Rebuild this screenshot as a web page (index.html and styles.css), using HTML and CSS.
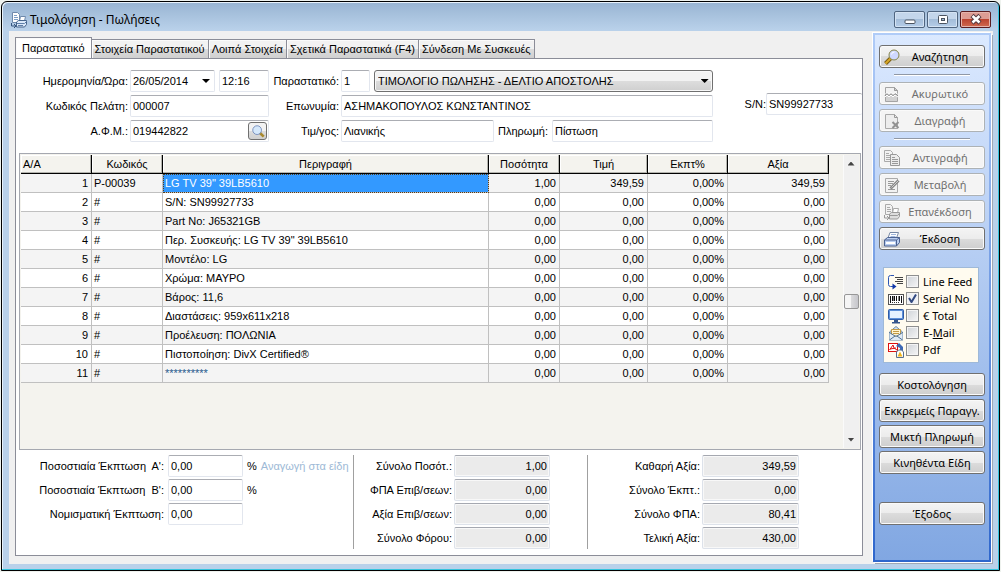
FILE: index.html
```html
<!DOCTYPE html>
<html lang="el">
<head>
    <meta charset="UTF-8">
    <meta name="viewport" content="width=device-width, initial-scale=1.0">
    <title>Τιμολόγηση - Πωλήσεις</title>
    <link rel="stylesheet" href="styles.css">
</head>
<body>
    <div class="window">
        <header class="titlebar">
            <svg class="title-icon" viewBox="0 0 16 16" aria-hidden="true">
                <path d="M1.5 .5h5l2 2v8h-7z" fill="#fff" stroke="#6f8aac"/>
                <path d="M3 3.5h3M3 5.5h4M3 7.5h4" stroke="#7f9fc6"/>
                <path d="M.5 11v3h4M3 12l2 2-2 2" fill="none" stroke="#35557f"/>
                <path d="M8.5 9l1-4.500h5l-1 4.500z" fill="#fff" stroke="#6f8aac"/>
                <path d="M5.5 10l2-1.500h8v4l-2 2.500h-8z" fill="#dbe9fa" stroke="#46658c"/>
                <path d="M6 11.500h7.500l2-2M7 13.500h5" fill="none" stroke="#5f7fa8"/>
            </svg>
            <h1>Τιμολόγηση - Πωλήσεις</h1>
            <div class="window-buttons">
                <button type="button" aria-label="Ελαχιστοποίηση"><svg viewBox="0 0 12 12"><rect x="1" y="7" width="10" height="3.500" rx="1" fill="#fff" stroke="#4b5460"/></svg></button>
                <button type="button" aria-label="Μεγιστοποίηση"><svg viewBox="0 0 12 12"><rect x="1.5" y="2.5" width="9" height="8" rx="1" fill="#fff" stroke="#4b5460"/><rect x="4.5" y="5.5" width="3" height="2" fill="#9db8d6" stroke="#4b5460"/></svg></button>
                <button type="button" class="close" aria-label="Κλείσιμο"><svg viewBox="0 0 12 12"><path d="M2 2.500l8 7.500M10 2.500L2 10" stroke="#553a40" stroke-width="4.500"/><path d="M2.500 3l7 6.500M9.500 3l-7 6.500" stroke="#fff" stroke-width="2.500"/></svg></button>
            </div>
        </header>

        <div class="content">
            <main class="main">
                <nav class="tabs">
                    <button type="button" class="tab active">Παραστατικό</button>
                    <button type="button" class="tab">Στοιχεία Παραστατικού</button>
                    <button type="button" class="tab">Λοιπά Στοιχεία</button>
                    <button type="button" class="tab">Σχετικά Παραστατικά (F4)</button>
                    <button type="button" class="tab">Σύνδεση Με Συσκευές</button>
                </nav>

                <div class="pane">
                    <form class="head-form">
                        <div class="fields">
                            <label for="date">Ημερομηνία/Ώρα:</label>
                            <div class="group">
                                <div class="combo date">
                                    <input type="text" id="date" value="26/05/2014">
                                    <button type="button" class="drop" aria-label="Ημερολόγιο"></button>
                                </div>
                                <input type="text" class="time" value="12:16" aria-label="Ώρα">
                            </div>
                            <label for="docNo">Παραστατικό:</label>
                            <div class="group">
                                <input type="text" id="docNo" class="doc-no" value="1">
                                <div class="doc-type">
                                    <select aria-label="Τύπος παραστατικού">
                                        <option>ΤΙΜΟΛΟΓΙΟ ΠΩΛΗΣΗΣ - ΔΕΛΤΙΟ ΑΠΟΣΤΟΛΗΣ</option>
                                    </select>
                                </div>
                            </div>

                            <label for="customer">Κωδικός Πελάτη:</label>
                            <input type="text" id="customer" value="000007">
                            <label for="name">Επωνυμία:</label>
                            <input type="text" id="name" value="ΑΣΗΜΑΚΟΠΟΥΛΟΣ ΚΩΝΣΤΑΝΤΙΝΟΣ">

                            <label for="afm">Α.Φ.Μ.:</label>
                            <div class="combo">
                                <input type="text" id="afm" value="019442822">
                                <button type="button" class="lookup" aria-label="Εύρεση">
                                    <svg viewBox="0 0 16 16"><path d="M10 10l4.500 4.500" stroke="#a8892f" stroke-width="3"/><circle cx="7" cy="7" r="5" fill="#d5e8fb" stroke="#6f87b8"/></svg>
                                </button>
                            </div>
                            <label for="price">Τιμ/γος:</label>
                            <div class="group">
                                <input type="text" id="price" class="price" value="Λιανικής">
                                <label for="payment">Πληρωμή:</label>
                                <input type="text" id="payment" class="payment" value="Πίστωση">
                            </div>
                        </div>
                        <div class="serial">
                            <label for="sn">S/N:</label>
                            <input type="text" id="sn" value="SN99927733">
                        </div>
                    </form>

                    <div class="grid-frame">
                        <div class="grid-area">
                            <table class="grid">
                                <colgroup>
                                    <col class="c-num"><col class="c-code"><col><col class="c-qty"><col class="c-price"><col class="c-disc"><col class="c-value">
                                </colgroup>
                                <thead>
                                    <tr><th>Α/Α</th><th>Κωδικός</th><th>Περιγραφή</th><th>Ποσότητα</th><th>Τιμή</th><th>Εκπτ%</th><th>Αξία</th></tr>
                                </thead>
                                <tbody>
                                    <tr><td>1</td><td>P-00039</td><td class="selected">LG TV 39" 39LB5610</td><td>1,00</td><td>349,59</td><td>0,00%</td><td>349,59</td></tr>
                                    <tr><td>2</td><td>#</td><td>S/N: SN99927733</td><td>0,00</td><td>0,00</td><td>0,00%</td><td>0,00</td></tr>
                                    <tr><td>3</td><td>#</td><td>Part No: J65321GB</td><td>0,00</td><td>0,00</td><td>0,00%</td><td>0,00</td></tr>
                                    <tr><td>4</td><td>#</td><td>Περ. Συσκευής: LG TV 39" 39LB5610</td><td>0,00</td><td>0,00</td><td>0,00%</td><td>0,00</td></tr>
                                    <tr><td>5</td><td>#</td><td>Μοντέλο: LG</td><td>0,00</td><td>0,00</td><td>0,00%</td><td>0,00</td></tr>
                                    <tr><td>6</td><td>#</td><td>Χρώμα: ΜΑΥΡΟ</td><td>0,00</td><td>0,00</td><td>0,00%</td><td>0,00</td></tr>
                                    <tr><td>7</td><td>#</td><td>Βάρος: 11,6</td><td>0,00</td><td>0,00</td><td>0,00%</td><td>0,00</td></tr>
                                    <tr><td>8</td><td>#</td><td>Διαστάσεις: 959x611x218</td><td>0,00</td><td>0,00</td><td>0,00%</td><td>0,00</td></tr>
                                    <tr><td>9</td><td>#</td><td>Προέλευση: ΠΟΛΩΝΙΑ</td><td>0,00</td><td>0,00</td><td>0,00%</td><td>0,00</td></tr>
                                    <tr><td>10</td><td>#</td><td>Πιστοποίηση: DivX Certified®</td><td>0,00</td><td>0,00</td><td>0,00%</td><td>0,00</td></tr>
                                    <tr><td>11</td><td>#</td><td class="stars">**********</td><td>0,00</td><td>0,00</td><td>0,00%</td><td>0,00</td></tr>
                                </tbody>
                            </table>
                        </div>
                        <div class="scrollbar">
                            <button type="button" class="up" aria-label="Πάνω"></button>
                            <div class="thumb"></div>
                            <button type="button" class="down" aria-label="Κάτω"></button>
                        </div>
                    </div>

                    <form class="totals">
                        <div class="discounts">
                            <label for="discA">Ποσοστιαία Έκπτωση&nbsp; Α':</label>
                            <input type="text" id="discA" value="0,00">
                            <div class="group"><span>%</span><a href="#">Αναγωγή στα είδη</a></div>
                            <label for="discB">Ποσοστιαία Έκπτωση&nbsp; Β':</label>
                            <input type="text" id="discB" value="0,00">
                            <span>%</span>
                            <label for="discC">Νομισματική Έκπτωση:</label>
                            <input type="text" id="discC" value="0,00">
                        </div>
                        <div class="sums">
                            <label for="sumQty">Σύνολο Ποσότ.:</label>
                            <input type="text" id="sumQty" value="1,00" readonly>
                            <label for="vatSur">ΦΠΑ Επιβ/σεων:</label>
                            <input type="text" id="vatSur" value="0,00" readonly>
                            <label for="valSur">Αξία Επιβ/σεων:</label>
                            <input type="text" id="valSur" value="0,00" readonly>
                            <label for="sumTax">Σύνολο Φόρου:</label>
                            <input type="text" id="sumTax" value="0,00" readonly>
                        </div>
                        <div class="sums last">
                            <label for="net">Καθαρή Αξία:</label>
                            <input type="text" id="net" value="349,59" readonly>
                            <label for="sumDisc">Σύνολο Έκπτ.:</label>
                            <input type="text" id="sumDisc" value="0,00" readonly>
                            <label for="sumVat">Σύνολο ΦΠΑ:</label>
                            <input type="text" id="sumVat" value="80,41" readonly>
                            <label for="total">Τελική Αξία:</label>
                            <input type="text" id="total" value="430,00" readonly>
                        </div>
                    </form>
                </div>
            </main>

            <aside class="side">
                <button type="button" class="btn">
                    <svg viewBox="0 0 16 16"><path d="M1.5 14.5l5-5" stroke="#7a5c10" stroke-width="4"/><path d="M1.5 14.5l5-5" stroke="#d9a827" stroke-width="2"/><circle cx="10" cy="6" r="5" fill="#cfd8ff" stroke="#85854a"/><path d="M7.5 5.500a3 3 0 0 1 3-2.500" stroke="#fff" fill="none"/></svg>
                    <span>Αναζήτηση</span>
                </button>
                <hr>
                <button type="button" class="btn" disabled>
                    <svg viewBox="0 0 16 16"><path d="M1.5 15.5V1.5h9l3 3v11z" fill="#d2d2d2" stroke="#a4a4a4"/><path d="M2 2h8v3h3v3H2z" fill="#f2f2f2"/><path d="M1 8.500l2-2 2 2 2-2 2 2 2-2 3 2M1 11l2-2 2 2 2-2 2 2 2-2 3 2" fill="none" stroke="#fff"/><path d="M1 9.700l2-2 2 2 2-2 2 2 2-2 3 2" fill="none" stroke="#888"/><path d="M10.5 1.5v3h3" fill="none" stroke="#999"/></svg>
                    <span>Ακυρωτικό</span>
                </button>
                <button type="button" class="btn" disabled>
                    <svg viewBox="0 0 16 16"><path d="M1.5 1.5h9l3 3v11h-12z" fill="#ededed" stroke="#aaa"/><path d="M10.5 1.5v3h3" fill="none" stroke="#999"/><path d="M8.5 9l6 6M14.5 9l-6 6" stroke="#929292" stroke-width="2"/></svg>
                    <span>Διαγραφή</span>
                </button>
                <hr>
                <button type="button" class="btn" disabled>
                    <svg viewBox="0 0 16 16"><path d="M.5 .5h6l2 2v9h-8z" fill="#f2f2f2" stroke="#aaa"/><path d="M2 3.5h3M2 5.5h4M2 7.5h4M2 9.5h4" stroke="#aaa"/><path d="M6.5 4.5h6l3 3v8h-9z" fill="#ececec" stroke="#999"/><path d="M8 7.5h3M8 9.5h6M8 11.5h6M8 13.5h6" stroke="#999"/></svg>
                    <span>Αντιγραφή</span>
                </button>
                <button type="button" class="btn" disabled>
                    <svg viewBox="0 0 16 16"><path d="M1.5 1.5h12v14h-12z" fill="#f2f2f2" stroke="#aaa"/><path d="M4 4.5h6M4 6.5h5M4 8.5h3M4 12.5h7" stroke="#999"/><path d="M6.5 11.500l8-8" stroke="#888" stroke-width="3"/><path d="M7.5 10.500l7-7" stroke="#ccc"/></svg>
                    <span>Μεταβολή</span>
                </button>
                <button type="button" class="btn" disabled>
                    <svg viewBox="0 0 16 16"><path d="M1.5 .5h5l2 2v8h-7z" fill="#f2f2f2" stroke="#aaa"/><path d="M3 3.5h3M3 5.5h4M3 7.5h4" stroke="#aaa"/><path d="M.5 11v3h4M3 12l2 2-2 2" fill="none" stroke="#999"/><path d="M8.5 9l1-4.500h5l-1 4.500z" fill="#fff" stroke="#aaa"/><path d="M5.5 10l2-1.500h8v4l-2 2.500h-8z" fill="#ddd" stroke="#999"/><path d="M6 11.500h7.500l2-2" fill="none" stroke="#999"/></svg>
                    <span>Επανέκδοση</span>
                </button>
                <button type="button" class="btn">
                    <svg viewBox="0 0 16 16"><path d="M4 7l2-5.500h8.500L12.500 7z" fill="#fff" stroke="#7688a5"/><path d="M7 3.5h5M6.500 5.5h5" stroke="#9fb6dc"/><path d="M.5 9l3-2.500h12v5l-3 3.500H.5z" fill="#b9cdf0" stroke="#4d6391"/><path d="M.5 9h12l3-2.500M12.5 9v6" fill="none" stroke="#4d6391"/><path d="M2 12h9" stroke="#fff" stroke-width="2"/></svg>
                    <span>Έκδοση</span>
                </button>

                <div class="options">
                    <label>
                        <svg viewBox="0 0 16 16"><path d="M6 1.5H2.5a2 2 0 0 0-2 2v7a2 2 0 0 0 2 2h3" fill="none" stroke="#2b55b5"/><path d="M4.500 9.500l4 3-4 3z" fill="#1238a8"/><path d="M7 3.5h8M9 5.5h6M7 7.5h8M9 9.5h6" stroke="#444"/></svg>
                        <input type="checkbox"> <span>Line Feed</span>
                    </label>
                    <label>
                        <svg viewBox="0 0 16 16"><rect x=".5" y="3.5" width="15" height="10" fill="#fff" stroke="#555"/><path d="M2.5 5v7M4.5 5v5M6.500 5v5M8.5 5v5M11 5v5M13.5 5v7" stroke="#111"/><path d="M5 5v5M11.5 5v5" stroke="#111"/><path d="M4 11.5h8" stroke="#333" stroke-dasharray="1 1"/></svg>
                        <input type="checkbox" checked> <span>Serial No</span>
                    </label>
                    <label>
                        <svg viewBox="0 0 16 16"><rect x=".5" y="1.5" width="15" height="10" rx="1" fill="#5d8fd8" stroke="#2e5ba6"/><rect x="2" y="3" width="12" height="7" fill="#e5f1ff"/><path d="M6 12h4v2h2v1.500H4V14h2z" fill="#34558c"/></svg>
                        <input type="checkbox"> <span>€ Total</span>
                    </label>
                    <label>
                        <svg viewBox="0 0 16 16"><path d="M1.5 7L8 1.5 14.5 7v8h-13z" fill="#cfe0f0" stroke="#6b88a6"/><path d="M3.500 4.5h9v7h-9z" fill="#fff3cf" stroke="#c29a45"/><path d="M5 6.5h6M5 8.5h6" stroke="#c29a45"/><path d="M1.5 8L7 11.500h2L14.500 8v7h-13z" fill="#dfeaf5"/><path d="M1.5 15L7 11h2l5.500 4M1.5 7.500L7 11M14.5 7.500L9 11" fill="none" stroke="#4d6f93"/></svg>
                        <input type="checkbox"> <span>E-<u>M</u>ail</span>
                    </label>
                    <label>
                        <svg viewBox="0 0 16 16"><rect x=".5" y="1.5" width="9" height="8" fill="#fff" stroke="#d11"/><path d="M1.500 8L5 3l1 3 3 2M2 7l6-1" fill="none" stroke="#d11"/><path d="M8 4l3-3 4 4v4h-3V6z" fill="#3d68b4"/><path d="M8.5 15.5V10l2-2h3l2 2v5.500z" fill="#fff" stroke="#57708f"/><path d="M9.500 14.500L12 9.500l2.500 5z" fill="#f0b51e"/></svg>
                        <input type="checkbox"> <span>Pdf</span>
                    </label>
                </div>

                <button type="button" class="btn plain">Κοστολόγηση</button>
                <button type="button" class="btn plain">Εκκρεμείς Παραγγ.</button>
                <button type="button" class="btn plain">Μικτή Πληρωμή</button>
                <button type="button" class="btn plain">Κινηθέντα Είδη</button>
                <button type="button" class="btn plain exit">Έξοδος</button>
            </aside>
        </div>
    </div>
</body>
</html>
```
FILE: styles.css
```css
* {
    box-sizing: border-box;
}
body {
    margin: 0;
    min-height: 100vh;
    padding: 1px;
    display: flex;
    background: #eef2ee;
    font-family: "Liberation Sans", Arial, sans-serif;
    font-size: 11px;
    line-height: 13px;
    color: #000;
}
button, input, select {
    font: inherit;
    color: inherit;
    margin: 0;
}
svg {
    display: block;
    flex: none;
}

/* window */
.window {
    flex: 1;
    display: flex;
    flex-direction: column;
    padding: 1px 6px 6px 7px;
    border: 1px solid #000;
    border-radius: 6px 6px 0 0;
    background: linear-gradient(#98b4d2, #b9d1ea 28px);
    box-shadow: inset -1px -1px #35c3dc, inset 1px 1px #e8f2fb;
}
.titlebar {
    height: 28px;
    display: flex;
    align-items: center;
    gap: 3px;
    padding: 0 2px;
}
.title-icon {
    width: 16px;
    height: 16px;
    margin-top: 6px;
}
.titlebar h1 {
    margin: 6px 0 0;
    flex: 1;
    font-family: "Noto Sans", sans-serif;
    font-size: 12px;
    line-height: 16px;
    font-weight: normal;
}
.window-buttons {
    display: flex;
    gap: 2px;
    padding-top: 4px;
}
.window-buttons button {
    width: 31px;
    height: 17px;
    display: flex;
    align-items: center;
    justify-content: center;
    padding: 0;
    border: 1px solid #4f6580;
    border-radius: 2px;
    background: linear-gradient(#c3d6eb 50%, #a3bdd9 50%, #b5cde8);
    box-shadow: inset 0 0 0 1px #d4e3f3;
}
.window-buttons svg {
    width: 12px;
    height: 12px;
}
.window-buttons .close {
    border-color: #5a1c20;
    background: linear-gradient(#dd9c93 45%, #b9402d 45%, #d06a50);
    box-shadow: inset 0 0 0 1px #e5b4ac;
}
.content {
    flex: 1;
    display: flex;
    background: #f0f0f0;
}
.main {
    flex: 1;
    min-width: 0;
    display: flex;
    flex-direction: column;
    padding: 6px 9px 8px 6px;
}

/* tabs */
.tabs {
    display: flex;
    align-items: flex-end;
    margin-bottom: -1px;
}
.tab {
    height: 20px;
    padding: 0 3px;
    border: 1px solid #8b8d98;
    border-left-width: 0;
    background: linear-gradient(#f2f2f2 50%, #dcdcdc 50%, #d0d0d0);
    box-shadow: inset 1px 1px #fbfbfb;
    white-space: nowrap;
}
.tab.active {
    height: 22px;
    padding: 0 6px;
    border-left-width: 1px;
    border-bottom-color: #fff;
    background: #fff;
}
.pane {
    flex: 1;
    display: flex;
    flex-direction: column;
    padding: 11px 0 6px 3px;
    border: 1px solid #8b8d98;
    background: #fff;
}

/* header form */
input[type="text"] {
    width: 100%;
    min-width: 0;
    height: 22px;
    padding: 0 2px;
    border: 1px solid #e2e6ee;
    border-top-color: #abadb3;
    border-radius: 2px;
    background: #fff;
}
.head-form {
    display: flex;
    gap: 32px;
}
.fields {
    flex: 1;
    display: grid;
    grid-template-columns: 109px 139px 68px 1fr;
    gap: 3px 2px;
    align-items: center;
}
.fields > label {
    text-align: right;
    white-space: nowrap;
}
.group {
    display: flex;
    align-items: center;
    gap: 4px;
}
.combo {
    display: flex;
    align-items: center;
    border: 1px solid #e2e6ee;
    border-top-color: #abadb3;
    border-radius: 2px;
    padding-right: 1px;
}
.combo input[type="text"] {
    height: 20px;
    border: 0;
}
.date {
    width: 85px;
}
.drop {
    width: 14px;
    flex: none;
    height: 18px;
    padding: 0;
    border: 0;
    background: none;
}
.drop::after, .doc-type::after {
    content: "";
    display: block;
    width: 8px;
    height: 4px;
    margin: auto;
    background: #000;
    clip-path: polygon(0 0, 100% 0, 50% 100%);
}
.time {
    flex: 1;
}
.doc-no[type="text"] {
    width: 29px;
}
.doc-type {
    flex: 1;
    position: relative;
}
.doc-type::after {
    position: absolute;
    right: 4px;
    top: 9px;
}
.doc-type select {
    display: block;
    width: 100%;
    height: 22px;
    padding: 0 3px;
    appearance: none;
    border: 1px solid #707070;
    border-radius: 3px;
    background: linear-gradient(#f2f2f2 50%, #dddddd 50%, #cfcfcf);
    box-shadow: inset 0 0 0 1px #f8f8f8;
}
.lookup {
    flex: none;
    width: 19px;
    height: 18px;
    display: flex;
    align-items: center;
    justify-content: center;
    padding: 0;
    border: 1px solid #707070;
    border-radius: 3px;
    background: linear-gradient(#f2f2f2 50%, #dddddd 50%, #cfcfcf);
}
.lookup svg {
    width: 14px;
    height: 14px;
}
.price {
    flex: 154;
}
.payment {
    flex: 162;
}
.serial {
    display: flex;
    align-items: center;
    align-self: center;
    padding-bottom: 4px;
}
.serial input[type="text"] {
    width: 96px;
    border-right: 0;
}

/* items grid */
.grid-frame {
    flex: 1;
    display: flex;
    margin: 11px 1px 4px 0;
    padding: 1px;
    border: 1px solid #a5a8b0;
    background: #f4f3ee;
}
.grid-area {
    flex: 1;
    padding-right: 14px;
}
.grid {
    width: 100%;
    table-layout: fixed;
    border-collapse: separate;
    border-spacing: 0;
}
.c-num, .c-code, .c-qty {
    width: 71px;
}
.c-price {
    width: 88px;
}
.c-disc {
    width: 80px;
}
.c-value {
    width: 101px;
}
.grid th {
    height: 19px;
    padding: 0 2px;
    border-right: 1px solid #000;
    border-bottom: 1px solid #000;
    background: #f4f3ee;
    box-shadow: inset -1px -1px #b4b4ae, inset 1px 1px #fff;
    font-weight: normal;
}
.grid th:first-child {
    text-align: left;
}
.grid td {
    height: 19px;
    padding: 0 3px;
    border-right: 1px solid #c0c0c0;
    border-bottom: 1px solid #c0c0c0;
    background: #fff;
    text-align: right;
    white-space: nowrap;
}
.grid tr:nth-child(odd) td {
    background: #f4f4f4;
}
.grid td:nth-child(2), .grid td:nth-child(3) {
    padding: 0 2px;
    text-align: left;
}
.grid tr td.selected {
    background: #3399ff;
    color: #fff;
    outline: 1px dotted #5a3c14;
    outline-offset: -1px;
}
.grid td.stars {
    color: #26598c;
}
.scrollbar {
    width: 16px;
    display: flex;
    flex-direction: column;
    align-items: center;
    justify-content: space-between;
    background: #f0f0f0;
    box-shadow: inset 1px 0 #fafafa;
}
.scrollbar button {
    width: 16px;
    height: 17px;
    padding: 0;
    border: 0;
    background: none;
}
.scrollbar button::after {
    content: "";
    display: block;
    width: 7px;
    height: 4px;
    margin: auto;
    background: #444;
    clip-path: polygon(0 0, 100% 0, 50% 100%);
}
.scrollbar .up::after {
    clip-path: polygon(50% 0, 100% 100%, 0 100%);
}
.thumb {
    width: 15px;
    height: 15px;
    border: 1px solid #979797;
    border-radius: 2px;
    background: linear-gradient(90deg, #f5f5f5 50%, #dadadc 50%, #c6c6cb);
}

/* totals */
.totals {
    display: flex;
    padding-top: 1px;
}
.discounts {
    width: 335px;
    display: grid;
    grid-template-columns: 145px 75px 1fr;
    grid-auto-rows: 22px;
    gap: 2px 4px;
    align-items: center;
    border-right: 1px solid #a0a0a0;
}
.discounts label, .sums label {
    text-align: right;
    white-space: nowrap;
}
.discounts a {
    color: #9db9d6;
    text-decoration: none;
    white-space: nowrap;
}
.sums {
    width: 234px;
    display: grid;
    grid-template-columns: 98px 96px;
    gap: 2px;
    align-items: center;
    border-right: 1px solid #a0a0a0;
}
.sums.last {
    flex: 1;
    grid-template-columns: 112px 97px;
    border-right: 0;
}
.sums input[type="text"] {
    background: #ebebeb;
    text-align: right;
    border-color: #a5a8b0 #dde2ea #dde2ea;
    box-shadow: inset 0 0 0 1px #f8f8f8;
}

/* side panel */
.side {
    width: 118px;
    display: flex;
    flex-direction: column;
    gap: 4px;
    margin: 2px 2px 2px 1px;
    padding: 10px 4px;
    border: 2px solid transparent;
    background:
        linear-gradient(#dbe9ff, #81a7e2) padding-box,
        linear-gradient(#b0ccf8, #2e66cc) border-box;
    box-shadow: -1px -1px #fff, 1px 1px #fff, 2px 2px #a0a8b4;
    font-family: "Noto Sans", sans-serif;
}
.side hr {
    width: 76px;
    height: 2px;
    margin: 2px auto;
    border: 0;
    border-top: 1px solid #9098a5;
    background: #fff;
}
.btn {
    height: 23px;
    display: flex;
    align-items: center;
    padding: 0 4px;
    border: 1px solid #707070;
    border-radius: 3px;
    background: linear-gradient(#f4f4f4, #ececec 50%, #dcdcdc 50%, #cecece);
    box-shadow: inset 0 0 0 1px #fafafa;
    white-space: nowrap;
}
.btn svg {
    width: 16px;
    height: 16px;
}
.btn span {
    flex: 1;
    text-align: center;
}
.btn:disabled {
    border-color: #adb2b5;
    background: #f4f4f4;
    color: #707070;
}
.btn.plain {
    justify-content: center;
    margin-bottom: -1px;
}
.btn.exit {
    margin-top: 25px;
}
.options {
    display: flex;
    flex-direction: column;
    margin: 13px 6px 6px 4px;
    padding: 5px 4px 4px;
    border: 1px solid #9fb9d8;
    background: #fffbef;
}
.options label {
    display: flex;
    align-items: center;
    gap: 2px;
    height: 17px;
    white-space: nowrap;
}
.options svg {
    width: 16px;
    height: 16px;
}
.options input {
    appearance: none;
    flex: none;
    width: 13px;
    height: 13px;
    border: 1px solid #8e8f8f;
    background: linear-gradient(135deg, #cfd3d8, #f6f6f6);
    box-shadow: inset 0 0 0 1px #f4f4f4;
}
.options input:checked {
    background: url("data:image/svg+xml,%3Csvg xmlns='http://www.w3.org/2000/svg' viewBox='0 0 11 11'%3E%3Cpath d='M2 5l2.500 4L9 1.500' fill='none' stroke='%23324a80' stroke-width='2'/%3E%3C/svg%3E") #eef0f4;
}
.options span {
    padding-left: 2px;
}
```
